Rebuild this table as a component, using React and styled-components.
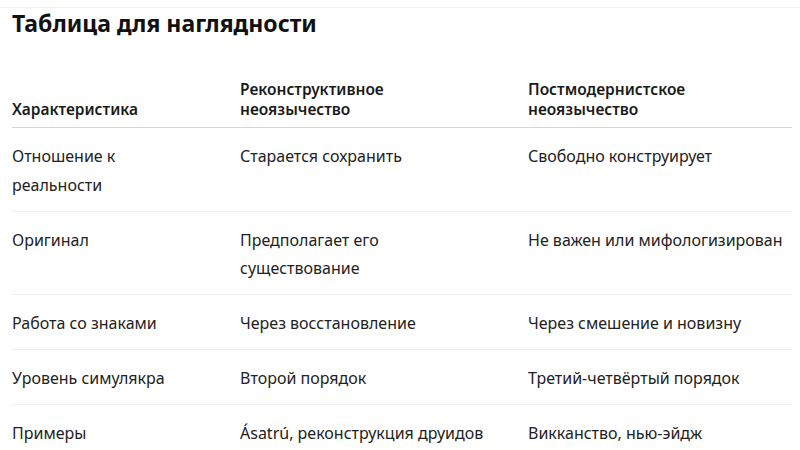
import React from "react";
import styled, { createGlobalStyle } from "styled-components";

const GlobalStyle = createGlobalStyle`
    body {
        margin: 0;
        background: #fff;
        font-family: "Noto Sans", "Open Sans", sans-serif;
        color: #1a1a1a;
    }
`;

const Page = styled.div`
    width: 800px;
    height: 443px;
    overflow: hidden;
    padding: 0 8px 0 12px;
    box-sizing: border-box;
    border-top: 1px solid #efefef;
    margin-top: 7px;
`;

const Title = styled.h2`
    margin: 0;
    font-size: 23px;
    line-height: 30px;
    font-weight: 700;
    color: #111;
`;

const Table = styled.table`
    width: 780px;
    margin-top: 41px;
    border-collapse: collapse;
    table-layout: fixed;
`;

export const Th = styled.th`
    text-align: start;
    vertical-align: bottom;
    font-size: 15.5px;
    font-weight: 600;
    line-height: 20px;
    padding: 0 0 8px 0;
    border-bottom: 1px solid #d4d4d4;
    width: ${(props) => (props.width ? props.width : "auto")};
`;

export const Tr = styled.tr`
    border-bottom: 1px solid #ececec;

    &:last-child {
        border-bottom: none;
    }
`;

export const Td = styled.td`
    vertical-align: top;
    font-size: 16px;
    line-height: 28.5px;
    padding: 14px ${(props) => (props.gap ? props.gap : "8px")} 11.5px 0;
    color: #222;
`;

const rows = [
    ["Отношение к реальности", "Старается сохранить", "Свободно конструирует"],
    ["Оригинал", "Предполагает его существование", "Не важен или мифологизирован"],
    ["Работа со знаками", "Через восстановление", "Через смешение и новизну"],
    ["Уровень симулякра", "Второй порядок", "Третий-четвёртый порядок"],
    ["Примеры", "Ásatrú, реконструкция друидов", "Викканство, нью-эйдж"],
];

const App = () => {
    return (
        <>
            <GlobalStyle />
            <Page>
                <Title>Таблица для наглядности</Title>
                <Table>
                    <thead>
                        <tr>
                            <Th width="228px">Характеристика</Th>
                            <Th width="288px">Реконструктивное<br />неоязычество</Th>
                            <Th>Постмодернистское<br />неоязычество</Th>
                        </tr>
                    </thead>
                    <tbody>
                        {rows.map((item, i) => (
                            <Tr key={i}>
                                <Td gap="56px">{item[0]}</Td>
                                <Td gap="36px">{item[1]}</Td>
                                <Td>{item[2]}</Td>
                            </Tr>
                        ))}
                    </tbody>
                </Table>
            </Page>
        </>
    );
};

export default App;
